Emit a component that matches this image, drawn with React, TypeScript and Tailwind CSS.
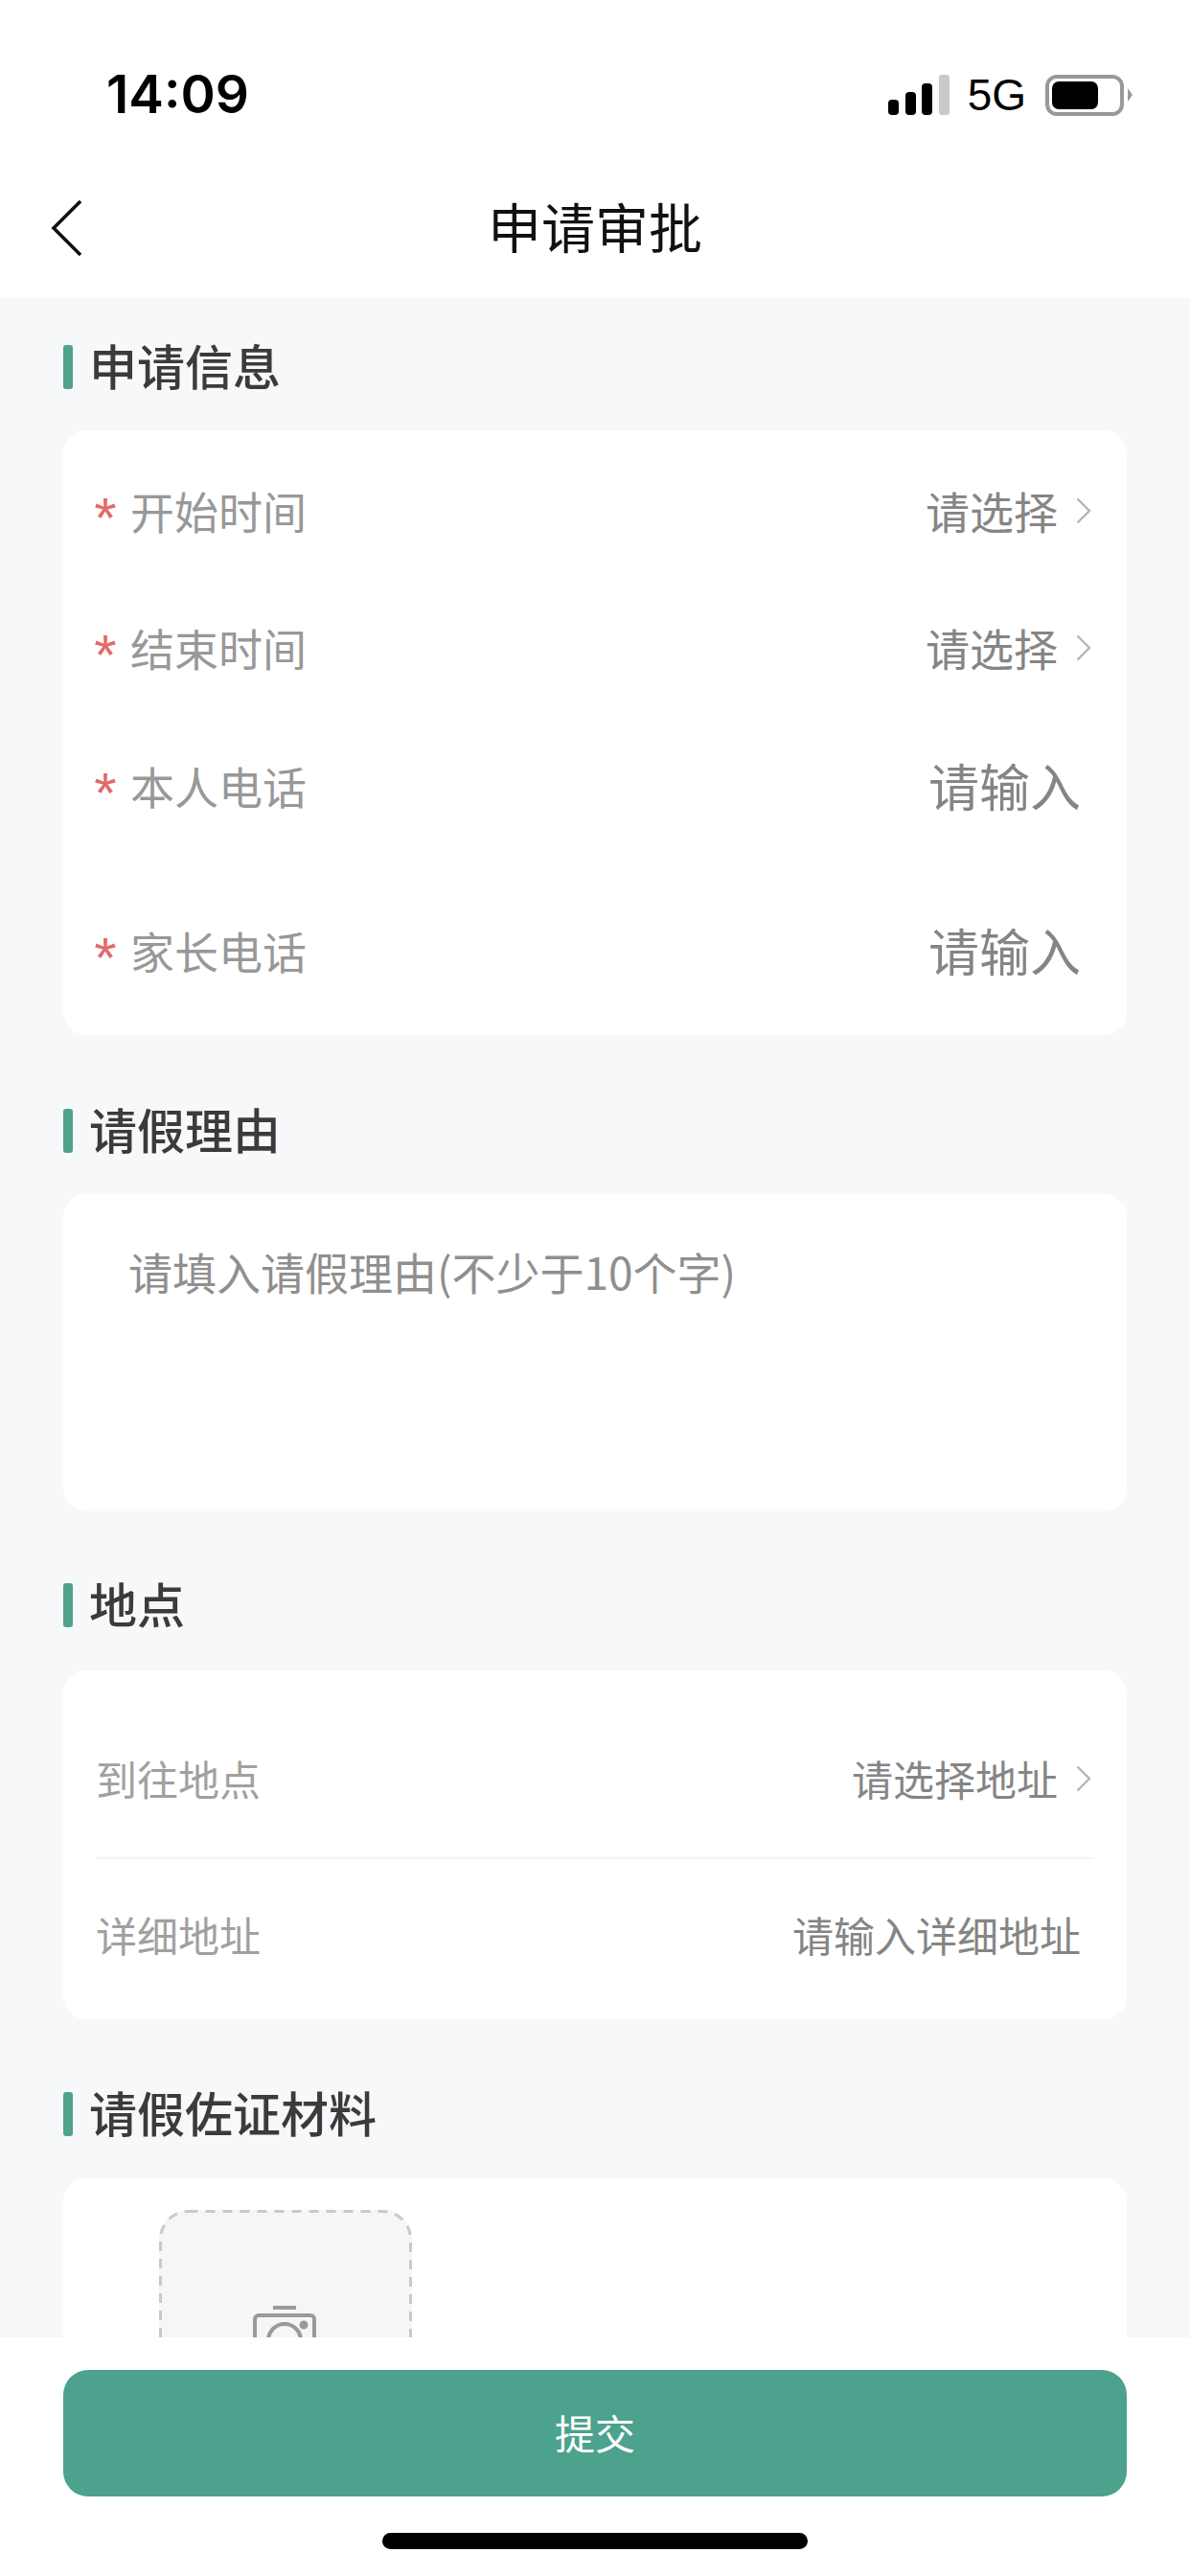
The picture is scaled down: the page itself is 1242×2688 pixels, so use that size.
import React from "react";

const cjk = "font-['Noto_Sans_CJK_SC','Noto_Sans',sans-serif]";

function SectionTitle({ text }: { text: string }) {
  return (
    <div className="flex h-[46px] items-center gap-[17px]">
      <span className="h-[46px] w-[10px] rounded-[3px] bg-[#4ea38b]" />
      <span className="pb-[7px] text-[50px] leading-[46px] font-medium text-[#3a3b3d]">{text}</span>
    </div>
  );
}

function Chevron() {
  return (
    <svg width="18" height="30" viewBox="0 0 18 30" fill="none" className="mt-[2px] mr-[2px] ml-[18px]">
      <path d="M2.5 2.5 15 15 2.5 27.5" stroke="#b5b5b5" strokeWidth="2.4" />
    </svg>
  );
}

function Star() {
  return <span className="mr-[13px] -ml-[3px] w-[26px] pt-[17px] text-center font-['Liberation_Sans',sans-serif] text-[60px] leading-[46px] text-[#e26a6a]">*</span>;
}

function Row({ label, value, size = "text-[46px]", chevron, star, className }: { label: string; value: string; size?: string; chevron?: boolean; star?: boolean; className: string }) {
  return (
    <div className={"flex items-center justify-between " + className}>
      <div className="flex items-center">
        {star && <Star />}
        <span className={size === "text-[43px]" ? "text-[43px] leading-[60px] text-[#a0a0a0]" : "text-[46px] leading-[60px] text-[#989898]"}>{label}</span>
      </div>
      <div className="flex items-center">
        <span className={size + " leading-[60px] text-[#858585]"}>{value}</span>
        {chevron ? <Chevron /> : <span className="w-[14px]" />}
      </div>
    </div>
  );
}

export default function App() {
  return (
    <div className={"flex h-[2688px] w-[1242px] flex-col overflow-hidden bg-[#f6f8fa] " + cjk}>
      <header className="h-[311px] shrink-0 bg-white">
        <div className="flex h-[192px] items-start justify-between pt-[65px] pr-[60px] pl-[111px]">
          <span className="font-['Inter',sans-serif] text-[55px] leading-[66px] font-semibold text-black">14:09</span>
          <div className="flex items-center pt-[11px]">
            <svg width="64" height="42" viewBox="0 0 64 42">
              <rect x="0" y="26" width="11" height="16" rx="4" fill="#000" />
              <rect x="18" y="18" width="11" height="24" rx="4" fill="#000" />
              <rect x="35" y="9" width="11" height="33" rx="4" fill="#000" />
              <rect x="53" y="0" width="11" height="42" rx="3" fill="#c9c9c9" />
            </svg>
            <span className="ml-[19px] font-['Liberation_Sans',sans-serif] text-[46px] leading-[46px] text-black">5G</span>
            <div className="ml-[20px] flex items-center">
              <div className="flex h-[43px] w-[82px] items-center rounded-[12px] border-[4px] border-[#999999] p-[3px]">
                <div className="h-[29px] w-[48px] rounded-[7px] bg-black" />
              </div>
              <svg width="5" height="14" viewBox="0 0 5 14" className="ml-[4px]">
                <path d="M0 0 5 7 0 14Z" fill="#999999" />
              </svg>
            </div>
          </div>
        </div>
        <div className="relative flex h-[92px] items-center justify-center">
          <svg width="34" height="58" viewBox="0 0 34 58" fill="none" className="absolute top-[17px] left-[52px]">
            <path d="M32 1 4 29 32 57" stroke="#111" strokeWidth="3.6" />
          </svg>
          <span className="pb-[6px] text-[56px] leading-[70px] text-[#111111]">申请审批</span>
        </div>
      </header>

      <main className="min-h-0 flex-1 overflow-hidden pt-[49px]">
        <div className="flex flex-col px-[66px]">
          <SectionTitle text="申请信息" />
          <section className="mt-[43px] flex h-[631px] flex-col rounded-[24px] bg-white px-[34px] pt-[53px]">
            <Row star label="开始时间" value="请选择" chevron className="h-[60px]" />
            <Row star label="结束时间" value="请选择" chevron className="mt-[83px] h-[60px]" />
            <Row star size="text-[53px]" label="本人电话" value="请输入" className="mt-[84px] h-[60px]" />
            <Row star size="text-[53px]" label="家长电话" value="请输入" className="mt-[112px] h-[60px]" />
          </section>

          <div className="mt-[77px]"><SectionTitle text="请假理由" /></div>
          <section className="mt-[43px] h-[331px] rounded-[24px] bg-white pt-[50px] pl-[68px]">
            <p className="text-[46px] leading-[60px] text-[#8f8f8f]">请填入请假理由(不少于10个字)</p>
          </section>

          <div className="mt-[75px]"><SectionTitle text="地点" /></div>
          <section className="mt-[45px] h-[364px] rounded-[24px] bg-white px-[34px]">
            <Row size="text-[43px]" label="到往地点" value="请选择地址" chevron className="mt-0 h-[197px] border-b-2 border-[#f3f3f3] pt-[28px]" />
            <Row size="text-[43px]" label="详细地址" value="请输入详细地址" className="h-[165px] pb-[10px]" />
          </section>

          <div className="mt-[76px]"><SectionTitle text="请假佐证材料" /></div>
          <section className="mt-[44px] h-[400px] rounded-[24px] bg-white pt-[33px] pl-[100px]">
            <div className="relative flex h-[264px] w-[264px] items-center justify-center rounded-[30px] bg-[#f6f6f7]">
              <svg width="264" height="264" viewBox="0 0 264 264" fill="none" className="absolute inset-0">
                <rect x="1.5" y="1.5" width="261" height="261" rx="29" stroke="#c9c9c9" strokeWidth="3" strokeDasharray="10 8" />
              </svg>
              <svg width="70" height="64" viewBox="0 0 70 64" fill="none" stroke="#9a9a9a" strokeWidth="4">
                <path d="M22 2h24" />
                <rect x="3" y="10" width="62" height="52" rx="4" />
                <circle cx="34" cy="36" r="17" />
                <circle cx="54" cy="20" r="2.5" fill="#9a9a9a" />
              </svg>
            </div>
          </section>
        </div>
      </main>

      <footer className="relative z-10 h-[249px] shrink-0 bg-white px-[66px] pt-[34px]">
        <button className="flex h-[132px] w-full items-center justify-center rounded-[26px] bg-[#4ca28c] pb-[4px] text-[42px] text-white">提交</button>
        <div className="mx-auto mt-[38px] h-[17px] w-[444px] rounded-full bg-black" />
      </footer>
    </div>
  );
}
